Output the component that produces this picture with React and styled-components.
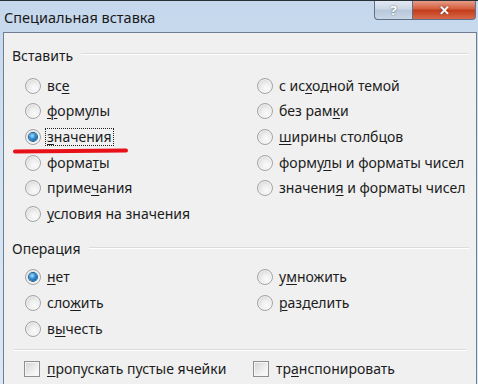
import React from 'react';
import styled, { createGlobalStyle } from 'styled-components';

const Global = createGlobalStyle`
  html, body { margin: 0; padding: 0; background: #d6e4f2; }
  body { font-family: "Noto Sans", "Open Sans", sans-serif; }
`;

const Window = styled.div`
  width: 478px;
  height: 384px;
  display: flex;
  flex-direction: column;
  background: linear-gradient(180deg, #c4d7ec 0%, #d3e2f2 40%, #dae7f5 100%);
  overflow: hidden;
  border-top: 1px solid #2a2f36;
  box-sizing: border-box;
`;

const TitleBar = styled.div`
  height: 31px;
  display: flex;
  align-items: flex-start;
  justify-content: space-between;
  padding-left: 4px;
`;

const Title = styled.div`
  font-size: 14.5px;
  color: #1a1a1a;
  margin-top: 6px;
`;

const Controls = styled.div`
  display: flex;
  margin-right: 2px;
  margin-top: -1px;
`;

const CtrlButton = styled.div`
  height: 19px;
  width: ${p => p.$w}px;
  border: 1px solid #5f6f85;
  border-top: none;
  display: flex;
  align-items: center;
  justify-content: center;
  color: #fff;
  font-weight: bold;
  font-size: 13px;
  background: ${p => p.$close
    ? 'linear-gradient(180deg, #e8a493 0%, #d6603f 45%, #c43d1b 55%, #d8694a 100%)'
    : 'linear-gradient(180deg, #e4ebf3 0%, #ccd8e6 45%, #b7c8dc 55%, #c9d7e6 100%)'};
  border-radius: ${p => p.$close ? '0 0 4px 0' : '0 0 0 4px'};
  border-left: ${p => p.$close ? 'none' : '1px solid #5f6f85'};
  text-shadow: 0 0 2px rgba(0,0,0,0.6);
`;

const Body = styled.div`
  flex: 1;
  margin-left: 3px;
  margin-right: 1px;
  background: #f0f0f0;
  border: 1px solid #6f7e90;
  border-bottom: none;
  padding: 10px 7px 0 7px;
  display: flex;
  flex-direction: column;
  color: #1c1c1c;
  font-size: 14px;
`;

const GroupHead = styled.div`
  display: flex;
  align-items: center;
  gap: 8px;
  height: 24px;
  padding-left: 1px;
  &::after {
    content: '';
    flex: 1;
    height: 1px;
    background: #dcdcdc;
    border-bottom: 1px solid #fff;
    margin-top: -2px;
  }
`;

const Grid = styled.div`
  display: grid;
  grid-template-columns: 232px 1fr;
  grid-auto-flow: column;
  grid-template-rows: repeat(${p => p.$rows}, 25.6px);
  padding-left: 14px;
  margin-top: ${p => p.$top}px;
`;

const Option = styled.label`
  display: flex;
  align-items: center;
  gap: 5px;
  height: 25.6px;
  position: relative;
  grid-column: ${p => p.$col};
  white-space: nowrap;
`;

const Radio = styled.span`
  width: 14px;
  height: 14px;
  border-radius: 50%;
  border: 1px solid #a4a4a4;
  background: radial-gradient(circle at 60% 65%, #fbfbfb 0%, #eeeeee 40%, #c9c9c9 100%);
  box-shadow: inset 0 0 0 1px rgba(255,255,255,0.6);
  display: flex;
  align-items: center;
  justify-content: center;
  flex-shrink: 0;
  &::after {
    content: '';
    display: ${p => p.$on ? 'block' : 'none'};
    width: 8px;
    height: 8px;
    border-radius: 50%;
    background: radial-gradient(circle at 40% 35%, #a8e0ff 0%, #2b8ad2 45%, #0b4a86 100%);
    box-shadow: 0 0 0 1px #1f5d92;
  }
`;

const Check = styled.span`
  width: 14px;
  height: 14px;
  border: 1px solid #8e8f8f;
  background: linear-gradient(135deg, #d2d2d2 0%, #f0f0f0 60%, #ffffff 100%);
  box-shadow: inset 0 0 0 1px #f6f6f6;
  flex-shrink: 0;
`;

const Text = styled.span`
  padding: 0 1px;
  line-height: 16px;
  outline: ${p => p.$focus ? '1px dotted #222' : 'none'};
  u { text-decoration-thickness: 1px; text-underline-offset: 2px; }
`;

const Mark = styled.span`
  position: absolute;
  left: -12px;
  top: 25px;
  width: 115px;
  height: 4px;
  border-radius: 2px;
  background: #e8111a;
  transform: rotate(-0.6deg);
`;

const Separator = styled.div`
  height: 1px;
  background: #dcdcdc;
  border-bottom: 1px solid #fff;
  margin: ${p => p.$m};
`;

const CheckRow = styled.div`
  display: grid;
  grid-template-columns: 229px 1fr;
  padding-left: 13px;
  margin-top: 10px;
`;

const CheckItem = styled.label`
  display: flex;
  align-items: center;
  gap: 6px;
`;

const paste = [
  { col: 1, t: <>вс<u>е</u></> },
  { col: 1, t: <><u>ф</u>ормулы</> },
  { col: 1, t: <><u>з</u>начения</>, on: true, mark: true },
  { col: 1, t: <>форма<u>т</u>ы</> },
  { col: 1, t: <>приме<u>ч</u>ания</> },
  { col: 1, t: <><u>у</u>словия на значения</> },
  { col: 2, t: <>с ис<u>х</u>одной темой</> },
  { col: 2, t: <>без рам<u>к</u>и</> },
  { col: 2, t: <><u>ш</u>ирины столбцов</> },
  { col: 2, t: <>форму<u>л</u>ы и форматы чисел</> },
  { col: 2, t: <>значени<u>я</u> и форматы чисел</> },
];

const ops = [
  { col: 1, t: <><u>н</u>ет</>, on: true },
  { col: 1, t: <>сло<u>ж</u>ить</> },
  { col: 1, t: <>в<u>ы</u>честь</> },
  { col: 2, t: <>у<u>м</u>ножить</> },
  { col: 2, t: <><u>р</u>азделить</> },
];

const Options = ({ items, rows, top }) => (
  <Grid $rows={rows} $top={top}>
    {items.map((o, i) => (
      <Option key={i} $col={o.col}>
        <Radio $on={o.on} />
        <Text $focus={o.mark}>{o.t}</Text>
        {o.mark && <Mark />}
      </Option>
    ))}
  </Grid>
);

export default function App() {
  return (
    <Window>
      <Global />
      <TitleBar>
        <Title>Специальная вставка</Title>
        <Controls>
          <CtrlButton $w={37}>?</CtrlButton>
          <CtrlButton $w={62} $close>✕</CtrlButton>
        </Controls>
      </TitleBar>
      <Body>
        <GroupHead>Вставить</GroupHead>
        <Options items={paste} rows={6} top={6} />
        <GroupHead style={{ marginTop: 10 }}>Операция</GroupHead>
        <Options items={ops} rows={3} top={4} />
        <Separator $m="8px 3px 0 3px" />
        <CheckRow>
          <CheckItem><Check /><Text><u>п</u>ропускать пустые ячейки</Text></CheckItem>
          <CheckItem><Check /><Text>тр<u>а</u>нспонировать</Text></CheckItem>
        </CheckRow>
      </Body>
    </Window>
  );
}
